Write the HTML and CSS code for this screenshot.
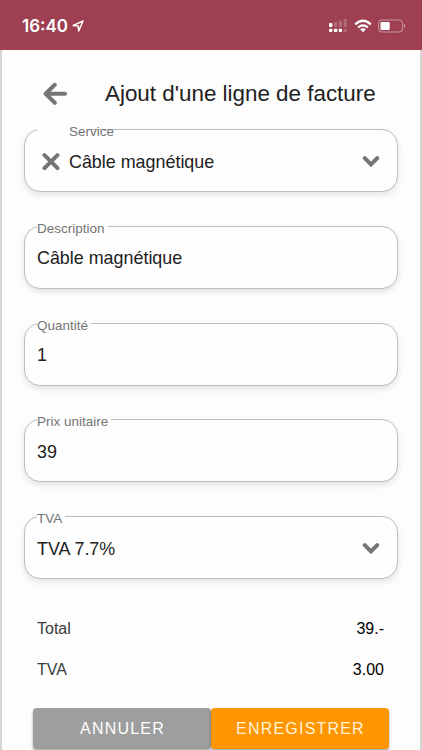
FILE: index.html
```html
<!DOCTYPE html>
<html lang="fr">

<head>
  <meta charset="UTF-8">
  <meta name="viewport" content="width=device-width, initial-scale=1">
  <title>Ajout d'une ligne de facture</title>
  <link rel="stylesheet" href="styles.css">
</head>

<body>

  <header class="status-bar">
    <span class="time">16:40</span>
    <svg class="location" width="12" height="12" viewBox="0 0 12 12">
      <path d="M1 5.6 L11 1 L6.7 11 L6.2 6.1 Z" />
    </svg>
    <div class="status-icons">
      <svg width="18" height="14" viewBox="0 0 18 14">
        <g fill="#fff">
          <rect x="0" y="4" width="3.4" height="4" rx="1" />
          <rect x="0" y="9.7" width="3.4" height="3.4" rx="1" />
          <rect x="4.9" y="9.7" width="3.4" height="3.4" rx="1" />
          <rect x="9.7" y="9.7" width="3.4" height="3.4" rx="1" />
        </g>
        <g fill="#fff" opacity=".22">
          <rect x="4.9" y="3" width="3.2" height="5" rx="1" />
          <rect x="9.7" y="1.7" width="3.2" height="6.3" rx="1" />
          <rect x="14.6" y="0" width="3.2" height="8" rx="1" />
          <rect x="14.6" y="9.7" width="3.2" height="3.4" rx="1" />
        </g>
      </svg>
      <svg class="wifi" width="18" height="14" viewBox="0 0 18 14">
        <g fill="none" stroke="#fff" stroke-width="2.3">
          <path d="M1.2 5.4 Q9 -1.8 16.8 5.4" />
          <path d="M4.1 8.5 Q9 4.2 13.9 8.5" />
        </g>
        <path fill="#fff" d="M6.1 10.3 Q9 8.1 11.9 10.3 L9 13.3 Z" />
      </svg>
      <svg class="battery" width="28" height="14" viewBox="0 0 28 14">
        <rect x=".6" y="1" width="24" height="12" rx="3.2" fill="none" stroke="#fff" stroke-opacity=".45" />
        <rect x="2.5" y="2.9" width="9.2" height="8.2" rx="1.4" fill="#fff" />
        <path d="M26 5 Q28.5 7 26 9 Z" fill="#fff" opacity=".5" />
      </svg>
    </div>
  </header>

  <main class="page">

    <div class="title-row">
      <svg class="back" width="26" height="24" viewBox="0 0 26 24">
        <path d="M13.8 2.8 L4.6 11.8 L13.8 20.8 M5 11.8 H24" />
      </svg>
      <h1>Ajout d'une ligne de facture</h1>
    </div>

    <form class="form">
      <div class="field field-service">
        <span class="notch"></span>
        <label>Service</label>
        <svg class="clear" width="18" height="18" viewBox="0 0 18 18">
          <path d="M2.5 2.2 L15.5 15.2 M15.5 2.2 L2.5 15.2" />
        </svg>
        <span class="value">Câble magnétique</span>
        <svg class="chevron" width="18" height="12" viewBox="0 0 18 12">
          <path d="M2.8 2.2 L9 8.4 L15.2 2.2" />
        </svg>
      </div>

      <div class="field">
        <label>Description</label>
        <span class="value">Câble magnétique</span>
      </div>

      <div class="field">
        <label>Quantité</label>
        <span class="value">1</span>
      </div>

      <div class="field">
        <label>Prix unitaire</label>
        <span class="value">39</span>
      </div>

      <div class="field">
        <label>TVA</label>
        <span class="value">TVA 7.7%</span>
        <svg class="chevron" width="18" height="12" viewBox="0 0 18 12">
          <path d="M2.8 2.2 L9 8.4 L15.2 2.2" />
        </svg>
      </div>
    </form>

    <div class="totals">
      <div class="total-row"><span>Total</span><span class="amount">39.-</span></div>
      <div class="total-row"><span>TVA</span><span class="amount">3.00</span></div>
    </div>

    <div class="actions">
      <button class="button cancel" type="button">ANNULER</button>
      <button class="button save" type="button">ENREGISTRER</button>
    </div>

  </main>

</body>

</html>
```
FILE: styles.css
```css
* {
  box-sizing: border-box;
}

body {
  margin: 0;
  height: 750px;
  overflow: hidden;
  background: #fdfdfd;
  color: #212121;
  font-family: "Liberation Sans", Arial, sans-serif;
}

/* status bar */
.status-bar {
  display: flex;
  align-items: center;
  height: 50px;
  padding: 2px 16px 0 22px;
  background: #9e4052;
  color: #fff;
}

.time {
  font-family: Inter, sans-serif;
  font-size: 17px;
  font-weight: 600;
}

.location {
  margin-left: 4px;
  fill: none;
  stroke: #fff;
  stroke-width: 1.5;
  stroke-linejoin: round;
}

.status-icons {
  display: flex;
  align-items: center;
  margin-left: auto;
}

.wifi {
  margin-left: 7px;
}

.battery {
  margin-left: 6px;
}

/* page */
.page {
  height: 700px;
  padding: 0 22px;
  border-left: 2px solid #d6d6d6;
  border-right: 2px solid #d6d6d6;
}

.title-row {
  display: flex;
  align-items: center;
  height: 79px;
  padding: 9px 0 0 17px;
}

.back {
  margin-right: 38px;
  fill: none;
  stroke: #757575;
  stroke-width: 4;
  stroke-linecap: round;
  stroke-linejoin: round;
}

h1 {
  margin: 0;
  font-size: 22.4px;
  font-weight: normal;
  white-space: nowrap;
}

/* form fields */
.form {
  display: grid;
  gap: 33.8px;
}

.field {
  position: relative;
  display: flex;
  align-items: center;
  height: 63px;
  padding: 3px 17px 0 12px;
  border: 1px solid #bdbdbd;
  border-radius: 16px;
  background: #fefefe;
  box-shadow: 0 3px 6px rgba(0, 0, 0, 0.1);
}

.field label {
  position: absolute;
  top: -6px;
  left: 12px;
  padding-right: 3px;
  background: #fdfdfd;
  color: #757575;
  font-size: 13.5px;
  line-height: 16px;
}

/* the label is pushed right by the clear icon, the gap in the border is not */
.notch {
  position: absolute;
  top: -2px;
  left: 12px;
  width: 52px;
  height: 4px;
  background: #fdfdfd;
}

.field-service label {
  left: 44px;
  padding: 0;
  background: none;
}

.value {
  font-size: 17.9px;
}

.clear {
  margin: 0 9px 0 5px;
  fill: none;
  stroke: #757575;
  stroke-width: 4;
  stroke-linecap: round;
}

.chevron {
  margin-left: auto;
  fill: none;
  stroke: #757575;
  stroke-width: 4;
  stroke-linecap: round;
}

/* totals */
.totals {
  padding: 29px 14px 0 13px;
}

.total-row {
  display: flex;
  justify-content: space-between;
  align-items: center;
  height: 41.5px;
  font-size: 16px;
}

.total-row span:first-child {
  color: #3a3a3a;
}

.total-row .amount {
  color: #000;
}

/* buttons */
.actions {
  display: flex;
  padding: 17px 9px 0 9px;
}

.button {
  flex: 1;
  height: 41px;
  padding: 1px 0 0 1px;
  border: none;
  border-radius: 4px;
  color: #fff;
  font-family: inherit;
  font-size: 16px;
  letter-spacing: 1.2px;
  box-shadow: 0 2px 3px rgba(0, 0, 0, 0.35);
}

.cancel {
  background: #9e9e9e;
}

.save {
  background: #ff9500;
  color: #fff3d6;
}
```
